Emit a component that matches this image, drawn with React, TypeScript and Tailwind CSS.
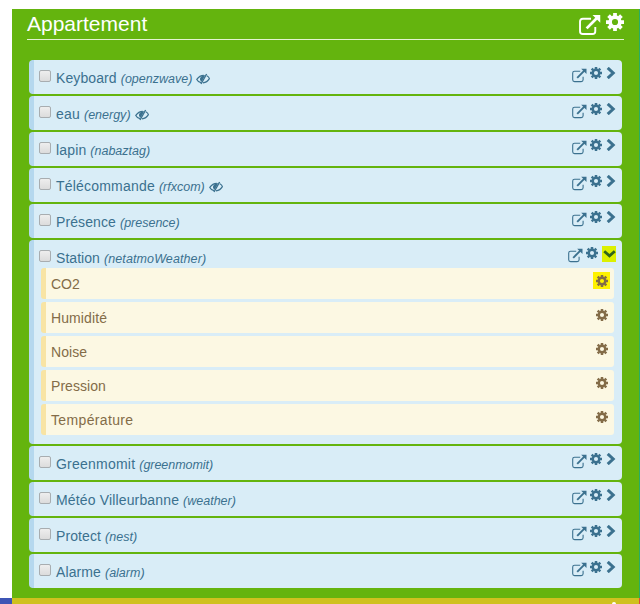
import React from "react";

function ExternalLink({ className, weight }: { className: string; weight: number }) {
  return (
    <svg viewBox="0 0 15 15" fill="none" stroke="currentColor" className={className}>
      <path strokeWidth={weight} d="M8.2 3.2H2.6Q.7 3.200 .7 5.100V11.700Q.7 13.600 2.600 13.600H9.200Q11.100 13.600 11.100 11.700V8.800" />
      <path strokeWidth="1.9" d="M5.200 9.800L12.600 2.400" />
      <path fill="currentColor" stroke="none" d="M9.200 .7H14.500V6Z" />
    </svg>
  );
}

function Cog({ className }: { className: string }) {
  return (
    <svg viewBox="-12 -12 24 24" fill="none" stroke="currentColor" className={className}>
      <circle r="6.5" strokeWidth="4.8" />
      <path
        strokeWidth="5"
        d="M0-8V-12M0 8V12M-8 0H-12M8 0H12M5.6-5.6L8.6-8.6M-5.6 5.6L-8.6 8.6M5.6 5.6L8.6 8.6M-5.6-5.6L-8.6-8.6"
      />
    </svg>
  );
}

function Chevron({ className }: { className: string }) {
  return (
    <svg viewBox="0 0 10 12" fill="none" stroke="currentColor" strokeWidth="3" className={className}>
      <path d="M1.7 .9L7.2 6L1.7 11.100" />
    </svg>
  );
}

function ChevronDown({ className }: { className: string }) {
  return (
    <svg viewBox="0 0 14 10" fill="none" stroke="currentColor" strokeWidth="3" className={className}>
      <path d="M1.3 2L7 7L12.7 2" />
    </svg>
  );
}

function EyeSlash() {
  return (
    <svg viewBox="0 0 14 12" fill="none" stroke="currentColor" className="mt-[1px] ml-[4px] h-[12px] w-[14px] shrink-0">
      <path strokeWidth="1.2" d="M5 9.600C3 9 1.500 7.900 .8 6.400C2.600 3.700 5.200 2.300 7.800 2.300M10.800 2.700C12.200 3.400 13.100 4.400 13.400 5.600C12 8 9.600 9.600 7 9.900" />
      <path strokeWidth="1.4" d="M10.600 1L5 11" />
      <path fill="currentColor" stroke="none" d="M9.200 2.200L5.700 8.700C4.100 7.900 3.700 6.300 4.200 5C4.900 3.100 7 1.900 9.200 2.200Z" />
    </svg>
  );
}

type Item = { name: string; plugin: string; hidden?: boolean; open?: boolean; spacing: string; small: string };

const items: Item[] = [
  { name: "Keyboard", plugin: "openzwave", hidden: true, spacing: "tracking-[0.1px]", small: "" },
  { name: "eau", plugin: "energy", hidden: true, spacing: "tracking-[0.2px]", small: "" },
  { name: "lapin", plugin: "nabaztag", spacing: "tracking-[0.15px]", small: "" },
  { name: "Télécommande", plugin: "rfxcom", hidden: true, spacing: "tracking-[0.2px]", small: "" },
  { name: "Présence", plugin: "presence", spacing: "tracking-[0.1px]", small: "" },
  { name: "Station", plugin: "netatmoWeather", open: true, spacing: "tracking-[0.05px]", small: "tracking-[0.11px]" },
  { name: "Greenmomit", plugin: "greenmomit", spacing: "tracking-[0.23px]", small: "tracking-[-0.05px]" },
  { name: "Météo Villeurbanne", plugin: "weather", spacing: "tracking-[0.15px]", small: "" },
  { name: "Protect", plugin: "nest", spacing: "tracking-[0.1px]", small: "" },
  { name: "Alarme", plugin: "alarm", spacing: "tracking-[0.1px]", small: "" },
];

const commands = [
  { label: "CO2", spacing: "" },
  { label: "Humidité", spacing: "tracking-[0.1px]" },
  { label: "Noise", spacing: "tracking-[0.05px]" },
  { label: "Pression", spacing: "tracking-[0.05px]" },
  { label: "Température", spacing: "tracking-[0.35px]" },
];

function Equipment({ item }: { item: Item }) {
  return (
    <li className={`${item.open ? "h-[204px]" : "h-[34px]"} rounded-[4px] border-l-[5px] border-[#b5d8ee] bg-[#d9edf7] text-[#3b718f]`}>
      <div className="flex h-[28px] items-start pl-[5px]">
        <span className="mt-[10px] h-[12px] w-[12px] shrink-0 rounded-[2px] border border-[#a8adb0] bg-linear-to-b from-[#eeeeee] to-[#dcdcdc]" />
        <div className="mt-[8px] ml-[5px] flex h-[20px] items-center whitespace-nowrap text-[14px] leading-[20px]">
          <span className={item.spacing}>{item.name}</span>
          <em className={`mt-[2px] ml-[4px] text-[12.5px] ${item.small}`}>({item.plugin})</em>
          {item.hidden && <EyeSlash />}
        </div>
        <div className="ml-auto flex items-start pr-[6px]">
          <ExternalLink weight={1.1} className="mt-[8px] h-[15px] w-[15px]" />
          <Cog className="mt-[7px] ml-[3px] h-[12px] w-[12px]" />
          {item.open ? (
            <span className="mt-[6px] ml-[4px] flex h-[16px] w-[14px] items-center justify-center bg-[#dcf000] text-[#2f641c]">
              <ChevronDown className="h-[10px] w-[13px]" />
            </span>
          ) : (
            <Chevron className="mt-[7px] ml-[4px] h-[12px] w-[10px]" />
          )}
        </div>
      </div>
      {item.open && (
        <ul className="flex flex-col gap-[3px] pr-[8px] pl-[7px]">
          {commands.map((c, i) => (
            <li key={c.label} className="flex h-[31px] items-start justify-between rounded-[3px] border-l-[5px] border-[#f8e4a4] bg-[#fcf8e3] pr-[4px] pl-[5px] text-[14px] leading-[20px] text-[#836c48]">
              <span className={`mt-[6px] ${c.spacing}`}>{c.label}</span>
              <span className={`mt-[4px] flex h-[17px] w-[17px] items-center justify-center ${i === 0 ? "bg-[#fff200]" : ""}`}>
                <Cog className="h-[12px] w-[12px]" />
              </span>
            </li>
          ))}
        </ul>
      )}
    </li>
  );
}

export default function App() {
  return (
    <div className="flex h-[604px] w-[640px] flex-col overflow-hidden bg-white pt-[9px] font-['Liberation_Sans',Arial,sans-serif]">
      <div className="flex h-[589px]">
        <div className="w-[12px]" />
        <main className="w-[627px] bg-[#64b40e] pr-[15px] pl-[15px]">
          <header className="flex h-[31px] items-start border-b border-[#e4f3d2] text-white">
            <h1 className="mt-[1px] text-[21px] leading-[28px]">Appartement</h1>
            <ExternalLink weight={1.3} className="mt-[5px] ml-auto h-[22px] w-[22px]" />
            <Cog className="mt-[4px] ml-[5px] h-[18px] w-[18px]" />
          </header>
          <ul className="mt-[20px] ml-[2px] flex w-[593px] flex-col gap-[2px]">
            {items.map((item) => (
              <Equipment key={item.name} item={item} />
            ))}
          </ul>
        </main>
        <div className="w-px bg-[#28ad66]" />
      </div>
      <footer className="flex h-[6px]">
        <div className="w-[12px] bg-[#3e55b5]" />
        <div className="flex w-[627px] items-end justify-end bg-[#cfc11f] pr-[23px]">
          <div className="h-[2px] w-[4px] rounded-t-[2px] bg-white" />
        </div>
        <div className="w-px bg-[#e24b35]" />
      </footer>
    </div>
  );
}
